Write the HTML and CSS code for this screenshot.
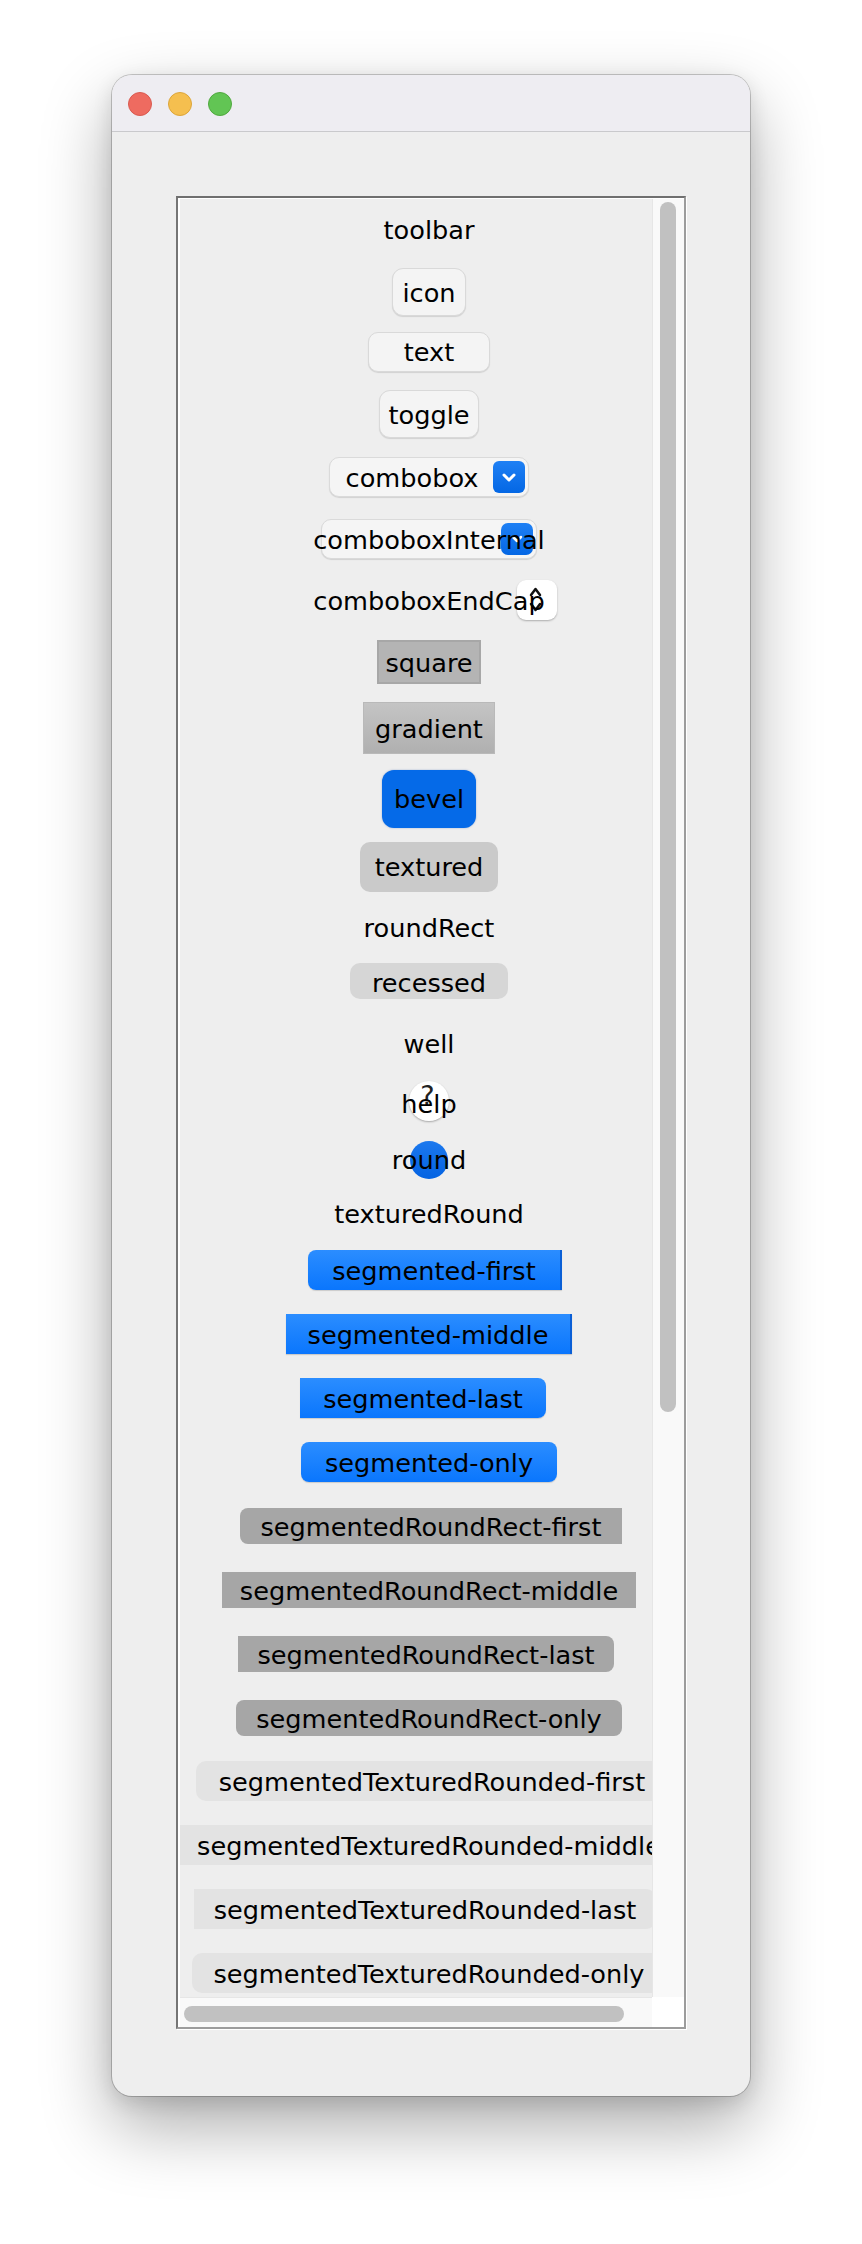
FILE: index.html
```html
<!DOCTYPE html>
<html>
<head>
<meta charset="utf-8">
<title>Button styles</title>
<link rel="stylesheet" href="styles.css">
</head>
<body>
<div class="window">
  <div class="titlebar">
    <span class="light red"></span>
    <span class="light yellow"></span>
    <span class="light green"></span>
  </div>
  <div class="content">
    <div class="scrollpane">
      <div class="viewport">
        <div class="panel">
          <div class="item toolbar-lbl">toolbar</div>
          <div class="item tb icon-btn">icon</div>
          <div class="item tb text-btn">text</div>
          <div class="item tb toggle-btn">toggle</div>
          <div class="item combo">
            <span class="combo-label">combobox</span>
            <span class="combo-arrow"><svg width="32" height="32" viewBox="0 0 32 32"><path d="M11 14 L16 19 L21 14" fill="none" stroke="#fff" stroke-width="3" stroke-linecap="round" stroke-linejoin="round"/></svg></span>
          </div>
          <div class="item combo combo-int">
            <span class="combo-arrow int"><svg width="32" height="32" viewBox="0 0 32 32"><path d="M12 14 L16 18 L20 14" fill="none" stroke="#fff" stroke-width="2.5" stroke-linecap="round" stroke-linejoin="round"/></svg></span>
            <span class="over">comboboxInternal</span>
          </div>
          <div class="item endcap">
            <span class="cap"><svg width="40" height="40" viewBox="0 0 40 40"><path d="M14 15 L18.5 9 L23 15" fill="none" stroke="#111" stroke-width="2.5" stroke-linecap="round" stroke-linejoin="round"/><path d="M14 24 L18.5 30 L23 24" fill="none" stroke="#111" stroke-width="2.5" stroke-linecap="round" stroke-linejoin="round"/></svg></span>
            <span class="over">comboboxEndCap</span>
          </div>
          <div class="item square">square</div>
          <div class="item gradient">gradient</div>
          <div class="item bevel">bevel</div>
          <div class="item textured">textured</div>
          <div class="item roundrect">roundRect</div>
          <div class="item recessed">recessed</div>
          <div class="item well">well</div>
          <div class="item help">
            <span class="help-circle"><span class="qmark">?</span></span>
            <span class="over help-lbl">help</span>
          </div>
          <div class="item round">
            <span class="round-circle"></span>
            <span class="over">round</span>
          </div>
          <div class="item textured-round">texturedRound</div>
          <div class="item seg seg-first">segmented-first</div>
          <div class="item seg seg-middle">segmented-middle</div>
          <div class="item seg seg-last">segmented-last</div>
          <div class="item seg seg-only">segmented-only</div>
          <div class="item srr srr-first">segmentedRoundRect-first</div>
          <div class="item srr srr-middle">segmentedRoundRect-middle</div>
          <div class="item srr srr-last">segmentedRoundRect-last</div>
          <div class="item srr srr-only">segmentedRoundRect-only</div>
          <div class="item str str-first">segmentedTexturedRounded-first</div>
          <div class="item str str-middle">segmentedTexturedRounded-middle</div>
          <div class="item str str-last">segmentedTexturedRounded-last</div>
          <div class="item str str-only">segmentedTexturedRounded-only</div>
        </div>
      </div>
      <div class="vbar"><div class="vthumb"></div></div>
      <div class="hbar"><div class="hthumb"></div></div>
      <div class="corner"></div>
    </div>
  </div>
</div>
</body>
</html>
```
FILE: styles.css
```css
html, body {
  margin: 0;
  background: #ffffff;
}
body {
  padding: 75px 0 0 112px;
  height: 2244px;
  box-sizing: border-box;
  overflow: hidden;
  font-family: "DejaVu Sans", "Verdana", sans-serif;
  font-size: 25.6px;
  color: #000;
}
.window {
  width: 638px;
  height: 2021px;
  border-radius: 20px;
  overflow: hidden;
  background: #eeeeee;
  box-shadow: 0 0 0 1px rgba(0,0,0,0.2), 0 30px 70px rgba(0,0,0,0.33), 0 6px 20px rgba(0,0,0,0.12);
}
.titlebar {
  height: 39px;
  background: #eeedf2;
  border-bottom: 1px solid #c9c9cc;
  display: flex;
  gap: 16px;
  padding: 17px 0 0 16px;
}
.light {
  width: 24px;
  height: 24px;
  border-radius: 50%;
  box-sizing: border-box;
}
.red { background: #ee6b60; border: 1px solid #d95a50; }
.yellow { background: #f5bf4f; border: 1px solid #dca53a; }
.green { background: #62c554; border: 1px solid #50a83f; }

.content {
  padding: 64px 0 0 64px;
}
.scrollpane {
  width: 510px;
  height: 1833px;
  box-sizing: border-box;
  border: 2px solid;
  border-color: #6f6f6f #9c9c9c #9c9c9c #757575;
  box-shadow: 1px 1px 0 #ffffff;
  background: #ffffff;
  padding: 1px 0 0 2px;
  display: grid;
  grid-template-columns: 472px 32px;
  grid-template-rows: 1798px 30px;
}
.viewport {
  overflow: hidden;
  background: #eeeeee;
}
.vbar {
  background: #f9f9f9;
  border-left: 1px solid #e6e6e6;
}
.vthumb {
  width: 16px;
  height: 1210px;
  margin: 3px 0 0 7px;
  border-radius: 8px;
  background: #c1c1c1;
}
.hbar {
  background: #f9f9f9;
  border-top: 1px solid #e6e6e6;
}
.hthumb {
  width: 440px;
  height: 16px;
  margin: 8px 0 0 4px;
  border-radius: 8px;
  background: #c1c1c1;
}
.corner { background: #ffffff; }

.panel {
  width: 498px;
  display: flex;
  flex-direction: column;
  align-items: center;
  padding-top: 11px;
}
.item {
  flex: none;
  display: flex;
  align-items: center;
  justify-content: center;
  box-sizing: border-box;
  white-space: nowrap;
  position: relative;
  line-height: 29px;
  height: 40px;
}
.over { position: relative; z-index: 1; }

.tb {
  background: #f4f4f4;
  border: 1px solid #d9d9d9;
  border-radius: 11px;
  box-shadow: 0 1px 1px rgba(0,0,0,0.12);
  padding-top: 2px;
}
.icon-btn { margin-top: 18px; width: 74px; height: 48px; }
.text-btn { margin-top: 16px; width: 122px; height: 40px; border-radius: 10px; padding-top: 0; }
.toggle-btn { margin-top: 18px; width: 100px; height: 48px; }

.combo {
  margin-top: 19px;
  width: 200px;
  height: 40px;
  background: #f5f5f5;
  border: 1px solid #dadada;
  border-radius: 10px;
  box-shadow: 0 1px 1px rgba(0,0,0,0.12);
  padding: 0 3px 0 1px;
  justify-content: flex-start;
}
.combo-label {
  flex: 1;
  text-align: center;
  padding-top: 2px;
}
.combo-arrow {
  width: 32px;
  height: 32px;
  border-radius: 6px;
  background: linear-gradient(#1f80f4, #0467e4);
  display: block;
}
.combo-arrow svg { display: block; }
.combo-int {
  margin-top: 22px;
  width: 216px;
  justify-content: center;
  padding: 2px 0 0 0;
}
.combo-arrow.int {
  position: absolute;
  right: 3px;
  top: 3px;
  border-radius: 7px;
}
.endcap { margin-top: 21px; padding-top: 2px; }
.cap {
  position: absolute;
  right: -12px;
  top: 0;
  width: 40px;
  height: 40px;
  background: #ffffff;
  border-radius: 9px;
  box-shadow: 0 1px 2px rgba(0,0,0,0.28);
}
.cap svg { display: block; }

.square {
  margin-top: 20px;
  width: 104px;
  height: 44px;
  background: #b4b4b4;
  border: 2px solid #a7a7a7;
  padding-top: 2px;
}
.gradient {
  margin-top: 18px;
  width: 132px;
  height: 52px;
  background: linear-gradient(#c4c4c4, #b0b0b0);
  border: 1px solid #b9b9b9;
  padding-top: 2px;
}
.bevel {
  margin-top: 16px;
  width: 94px;
  height: 58px;
  background: #056ae8;
  border-radius: 12px;
  box-shadow: 0 0 2px rgba(0,60,160,0.35);
}
.textured {
  margin-top: 14px;
  width: 138px;
  height: 50px;
  background: #cacaca;
  border-radius: 10px;
}
.roundrect { margin-top: 16px; }
.recessed {
  margin-top: 15px;
  width: 158px;
  height: 36px;
  background: #d6d6d6;
  border-radius: 10px;
  padding-top: 4px;
}
.well { margin-top: 25px; }
.help { margin-top: 17px; }
.help-lbl { padding-top: 6px; }
.help-circle {
  position: absolute;
  left: 50%;
  top: 0;
  width: 40px;
  height: 40px;
  margin-left: -20px;
  border-radius: 50%;
  background: #ffffff;
  box-shadow: 0 1px 2px rgba(0,0,0,0.3);
  text-align: center;
}
.qmark {
  display: block;
  font-size: 27px;
  line-height: 30px;
  color: #222;
  margin-left: -3px;
}
.round { margin-top: 20px; height: 38px; }
.round-circle {
  position: absolute;
  left: 50%;
  top: 0;
  width: 38px;
  height: 38px;
  margin-left: -19px;
  border-radius: 50%;
  background: linear-gradient(#1b78ee, #0463e2);
}
.textured-round { margin-top: 15px; }

.seg {
  margin-top: 24px;
  height: 40px;
  background: linear-gradient(#2b8dff, #0a76fd);
  box-shadow: 0 1px 1px rgba(0,0,0,0.15);
  padding-top: 2px;
}
.seg-first {
  margin-top: 16px;
  width: 254px;
  margin-left: 12px;
  border-radius: 8px 0 0 8px;
  border-right: 2px solid #0a5fd6;
}
.seg-middle {
  width: 286px;
  border-right: 2px solid #0a5fd6;
}
.seg-last {
  width: 246px;
  margin-right: 12px;
  border-radius: 0 8px 8px 0;
}
.seg-only {
  width: 256px;
  border-radius: 8px;
}

.srr {
  margin-top: 28px;
  height: 36px;
  background: #a6a6a6;
  padding-top: 2px;
}
.srr-first { margin-top: 26px; width: 382px; margin-left: 4px; border-radius: 8px 0 0 8px; }
.srr-middle { width: 414px; }
.srr-last { width: 376px; margin-right: 6px; border-radius: 0 8px 8px 0; }
.srr-only { width: 386px; border-radius: 8px; }

.str {
  margin-top: 24px;
  height: 40px;
  background: #e3e3e3;
  padding-top: 2px;
}
.str-first { margin-top: 25px; width: 472px; margin-left: 6px; border-radius: 10px 0 0 10px; }
.str-middle { width: 498px; }
.str-last { width: 462px; margin-right: 8px; border-radius: 0 10px 10px 0; }
.str-only { width: 474px; border-radius: 10px; }
```
